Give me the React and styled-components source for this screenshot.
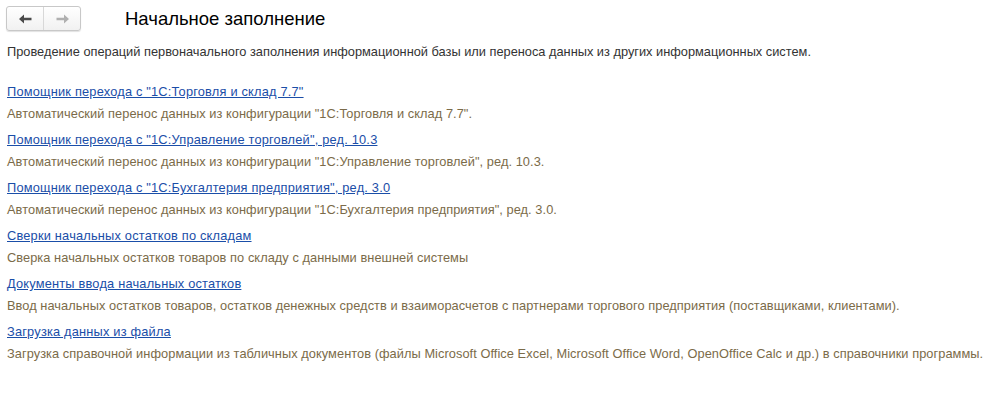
import React from "react";
import styled, { createGlobalStyle } from "styled-components";

const Global = createGlobalStyle`
  html, body { margin: 0; padding: 0; background: #fff; }
  body { font-family: Arial, "Liberation Sans", sans-serif; }
`;

const Page = styled.div`
  width: 992px;
  height: 406px;
  box-sizing: border-box;
  padding: 6px 0 0 0;
  background: #fff;
`;

const Header = styled.div`
  display: flex;
  align-items: center;
  height: 25px;
  padding-left: 6px;
`;

const NavGroup = styled.div`
  display: flex;
  height: 23px;
  border: 1px solid #c8c8c8;
  border-radius: 3px;
  background: linear-gradient(#ffffff, #f1f1f1);
  box-shadow: 0 1px 1px rgba(0,0,0,0.12);
  overflow: hidden;
`;

const NavButton = styled.div`
  width: 36px;
  display: flex;
  align-items: center;
  justify-content: center;
  & + & { border-left: 1px solid #d8d8d8; }
`;

const Title = styled.h1`
  margin: 0 0 0 44px;
  font-size: 18.5px;
  font-weight: normal;
  color: #000;
  line-height: 25px;
`;

const Intro = styled.div`
  margin: 13px 0 0 7px;
  font-size: 12.8px;
  color: #333;
  line-height: 16px;
`;

const List = styled.div`
  margin-top: 24px;
  padding-left: 7px;
  display: flex;
  flex-direction: column;
`;

const Item = styled.div`
  height: 48px;
  display: flex;
  flex-direction: column;
`;

const Link = styled.a`
  font-size: 12.8px;
  line-height: 16px;
  letter-spacing: 0.2px;
  color: #1a4ea8;
  text-decoration: underline;
  cursor: pointer;
  align-self: flex-start;
`;

const Desc = styled.div`
  margin-top: 6px;
  font-size: 12.8px;
  line-height: 16px;
  letter-spacing: 0.06px;
  color: #7b6b49;
`;

const Arrow = ({ color, dir }) => (
  <svg width="13" height="10" viewBox="0 0 13 10">
    <g transform={dir === "right" ? "translate(13,0) scale(-1,1)" : undefined} fill={color}>
      <polygon points="0,5 5,0.5 5,3.8 12.5,3.8 12.5,6.2 5,6.2 5,9.5" />
    </g>
  </svg>
);

const items = [
  ["Помощник перехода с \"1С:Торговля и склад 7.7\"", "Автоматический перенос данных из конфигурации \"1С:Торговля и склад 7.7\"."],
  ["Помощник перехода с \"1С:Управление торговлей\", ред. 10.3", "Автоматический перенос данных из конфигурации \"1С:Управление торговлей\", ред. 10.3."],
  ["Помощник перехода с \"1С:Бухгалтерия предприятия\", ред. 3.0", "Автоматический перенос данных из конфигурации \"1С:Бухгалтерия предприятия\", ред. 3.0."],
  ["Сверки начальных остатков по складам", "Сверка начальных остатков товаров по складу с данными внешней системы"],
  ["Документы ввода начальных остатков", "Ввод начальных остатков товаров, остатков денежных средств и взаиморасчетов с партнерами торгового предприятия (поставщиками, клиентами)."],
  ["Загрузка данных из файла", "Загрузка справочной информации из табличных документов (файлы Microsoft Office Excel, Microsoft Office Word, OpenOffice Calc и др.) в справочники программы."],
];

export default function App() {
  return (
    <Page>
      <Global />
      <Header>
        <NavGroup>
          <NavButton><Arrow color="#4a4a4a" dir="left" /></NavButton>
          <NavButton><Arrow color="#b0b0b0" dir="right" /></NavButton>
        </NavGroup>
        <Title>Начальное заполнение</Title>
      </Header>
      <Intro>Проведение операций первоначального заполнения информационной базы или переноса данных из других информационных систем.</Intro>
      <List>
        {items.map(([l, d]) => (
          <Item key={l}>
            <Link>{l}</Link>
            <Desc>{d}</Desc>
          </Item>
        ))}
      </List>
    </Page>
  );
}
